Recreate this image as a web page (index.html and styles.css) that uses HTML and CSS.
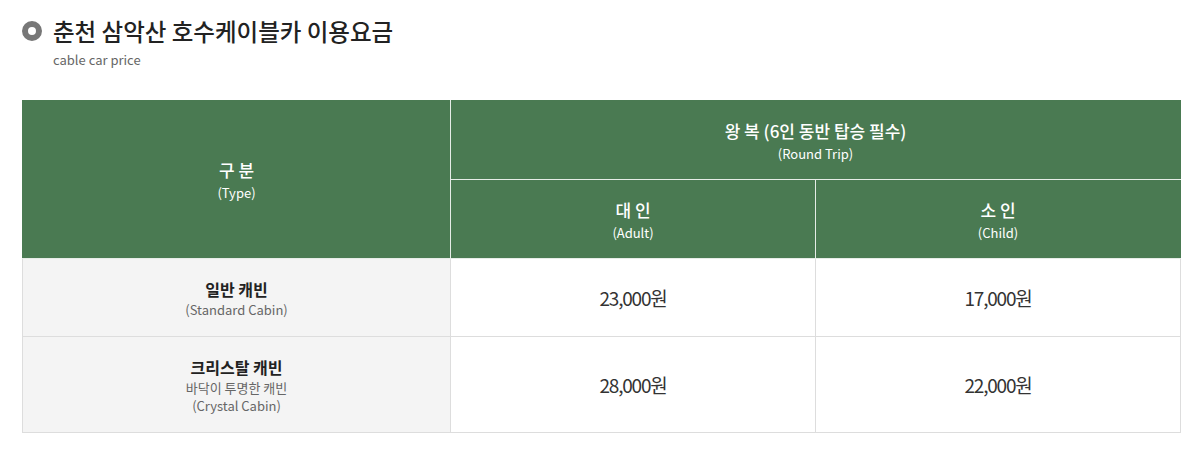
FILE: index.html
```html
<!DOCTYPE html>
<html>
<head>
    <link rel="stylesheet" href="styles.css">
</head>
<body>
    <div class="price-section">
        <div class="section-title">
            <span class="title-dot"></span>
            <h2>춘천 삼악산 호수케이블카 이용요금</h2>
        </div>
        <p class="section-sub">cable car price</p>

        <table class="price-table">
            <colgroup>
                <col class="col-type">
                <col class="col-adult">
                <col class="col-child">
            </colgroup>
            <thead>
                <tr class="head-top">
                    <th rowspan="2">구 분<span class="en">(Type)</span></th>
                    <th colspan="2">왕 복 (6인 동반 탑승 필수)<span class="en">(Round Trip)</span></th>
                </tr>
                <tr class="head-bottom">
                    <th>대 인<span class="en">(Adult)</span></th>
                    <th>소 인<span class="en">(Child)</span></th>
                </tr>
            </thead>
            <tbody>
                <tr class="row-standard">
                    <td class="cabin">
                        <strong>일반 캐빈</strong>
                        <span class="desc">(Standard Cabin)</span>
                    </td>
                    <td class="price">23,000원</td>
                    <td class="price">17,000원</td>
                </tr>
                <tr class="row-crystal">
                    <td class="cabin">
                        <strong>크리스탈 캐빈</strong>
                        <span class="desc">바닥이 투명한 캐빈</span>
                        <span class="desc">(Crystal Cabin)</span>
                    </td>
                    <td class="price">28,000원</td>
                    <td class="price">22,000원</td>
                </tr>
            </tbody>
        </table>
    </div>
</body>
</html>
```

FILE: styles.css
```css
body {
    margin: 0;
    background: #fff;
    font-family: "Noto Sans CJK KR", "Noto Sans", sans-serif;
    color: #333;
}

.price-section {
    padding: 14px 22px 20px 22px;
}

.section-title {
    display: flex;
    align-items: center;
    gap: 11px;
}

.title-dot {
    width: 8px;
    height: 8px;
    border: 6px solid #777;
    border-radius: 50%;
    background: #fff;
    flex-shrink: 0;
}

.section-title h2 {
    margin: 0;
    font-size: 23.5px;
    font-weight: 500;
    line-height: 34px;
    color: #222;
}

.section-sub {
    margin: 3px 0 0 31px;
    font-size: 13px;
    line-height: 18px;
    color: #666;
}

.price-table {
    width: 1159px;
    margin-top: 31px;
    border-collapse: collapse;
    table-layout: fixed;
    text-align: center;
}

.col-type {
    width: 428px;
}

.col-adult {
    width: 365px;
}

.price-table th {
    background: #4a7a52;
    color: #fff;
    font-size: 17px;
    font-weight: 500;
    line-height: 24px;
    border: 1px solid #e6ece7;
    border-top-color: #4a7a52;
    padding: 3px 0 0 0;
    vertical-align: middle;
}

.price-table th:first-child {
    border-left-color: #4a7a52;
}

.price-table th:last-child {
    border-right-color: #4a7a52;
}

.head-bottom th:first-child {
    border-left-color: #e6ece7;
}

.price-table .en {
    display: block;
    font-size: 13px;
    font-weight: 400;
    line-height: 22px;
}

.head-top th {
    height: 75px;
}

.head-bottom th {
    height: 75px;
}

.price-table td {
    border: 1px solid #ddd;
    padding: 0;
    vertical-align: middle;
}

.row-standard td {
    height: 77px;
}

.row-crystal td {
    height: 95px;
}

.cabin {
    background: #f4f4f4;
}

.cabin strong {
    display: block;
    font-size: 16px;
    font-weight: 700;
    line-height: 24px;
    color: #222;
}

.cabin .desc {
    display: block;
    font-size: 13px;
    line-height: 18px;
    color: #666;
}

.price {
    font-size: 19px;
    color: #333;
    letter-spacing: -1.2px;
}
```
